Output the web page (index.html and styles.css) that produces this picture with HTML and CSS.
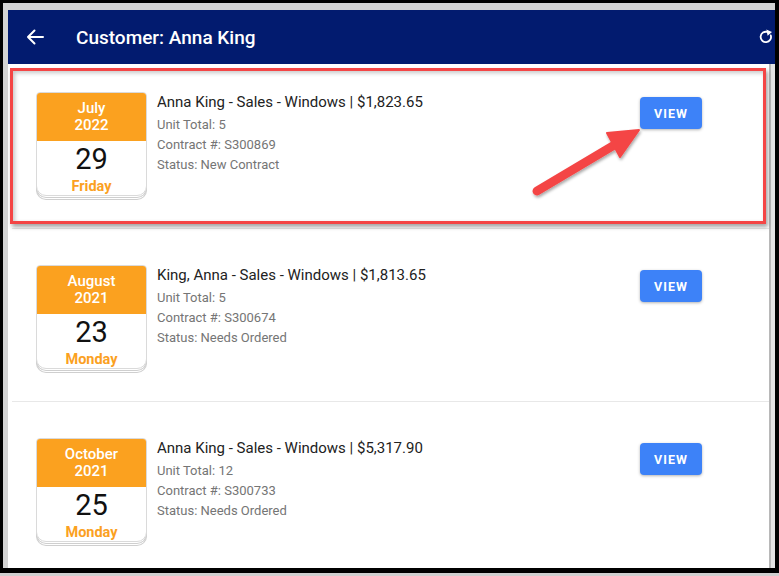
FILE: index.html
```html
<!DOCTYPE html>
<html>
<head>
<meta charset="utf-8">
<link rel="stylesheet" href="styles.css">
</head>
<body>
<div class="frame">
  <div class="app">
    <header class="topbar">
      <svg class="back" width="18" height="16" viewBox="0 0 18 16"><path d="M17 8H2M8.5 1.5L2 8l6.5 6.5" fill="none" stroke="#fff" stroke-width="2" stroke-linecap="round" stroke-linejoin="round"/></svg>
      <h1 class="title">Customer: Anna King</h1>
      <svg class="refresh" width="16" height="16" viewBox="0 0 16 16"><path d="M12.8 6.4A5.2 5.2 0 1 1 9.4 3" fill="none" stroke="#fff" stroke-width="1.8" stroke-linecap="round"/><path d="M8.3 0.4L14 2.9L9.6 6.8Z" fill="#fff"/></svg>
    </header>
    <main class="list">
      <div class="card first">
        <div class="cal">
          <div class="cal-top">July<br>2022</div>
          <div class="cal-day">29</div>
          <div class="cal-wd">Friday</div>
        </div>
        <div class="info">
          <div class="info-title">Anna King - Sales - Windows | $1,823.65</div>
          <div class="info-line">Unit Total: 5</div>
          <div class="info-line">Contract #: S300869</div>
          <div class="info-line">Status: New Contract</div>
        </div>
        <button class="view">VIEW</button>
      </div>
      <div class="card">
        <div class="cal">
          <div class="cal-top">August<br>2021</div>
          <div class="cal-day">23</div>
          <div class="cal-wd">Monday</div>
        </div>
        <div class="info">
          <div class="info-title">King, Anna - Sales - Windows | $1,813.65</div>
          <div class="info-line">Unit Total: 5</div>
          <div class="info-line">Contract #: S300674</div>
          <div class="info-line">Status: Needs Ordered</div>
        </div>
        <button class="view">VIEW</button>
      </div>
      <div class="card">
        <div class="cal">
          <div class="cal-top">October<br>2021</div>
          <div class="cal-day">25</div>
          <div class="cal-wd">Monday</div>
        </div>
        <div class="info">
          <div class="info-title">Anna King - Sales - Windows | $5,317.90</div>
          <div class="info-line">Unit Total: 12</div>
          <div class="info-line">Contract #: S300733</div>
          <div class="info-line">Status: Needs Ordered</div>
        </div>
        <button class="view">VIEW</button>
      </div>
    </main>
    <div class="highlight"></div>
    <svg class="pointer" width="130" height="90" viewBox="0 0 130 90">
      <defs>
        <filter id="sh" x="-20%" y="-20%" width="140%" height="140%">
          <feDropShadow dx="1" dy="2" stdDeviation="1.5" flood-color="#000" flood-opacity="0.35"/>
        </filter>
      </defs>
      <g filter="url(#sh)">
        <path d="M9 71L88 24" stroke="#f44545" stroke-width="9" stroke-linecap="round" fill="none"/>
        <path d="M111 10L79 13L92 37Z" fill="#f44545" stroke="#f44545" stroke-width="2" stroke-linejoin="round"/>
      </g>
    </svg>
  </div>
</div>
</body>
</html>
```

FILE: styles.css
```css
html, body {
  margin: 0;
  padding: 0;
}
body {
  background: #cfcfcf;
  width: 779px;
  height: 576px;
  overflow: hidden;
  font-family: Roboto, "Liberation Sans", sans-serif;
}
.frame {
  box-sizing: border-box;
  width: 779px;
  height: 573px;
  border-style: solid;
  border-color: #000;
  border-width: 3px 4px 5px 3px;
  padding: 7px 0 0 5px;
  background: #d3d3d3;
}
.app {
  position: relative;
  height: 558px;
  background: #fff;
  overflow: hidden;
  display: flex;
  flex-direction: column;
}
.topbar {
  height: 54px;
  flex: none;
  background: #021b6f;
  display: flex;
  align-items: center;
  color: #fff;
}
.back {
  margin-left: 18px;
  margin-right: 32px;
}
.title {
  margin: 0;
  font-size: 19px;
  font-weight: 500;
  flex: 1;
}
.refresh {
  margin-right: 1px;
}
.list {
  flex: 1;
  box-shadow: inset -4px 0 0 #e4e4e4, inset -6px 0 0 #b8b8b8;
}
.card {
  display: flex;
  align-items: flex-start;
  margin: 0 6px 0 4px;
  padding: 36px 67px 32px 24px;
  border-bottom: 1px solid #e8e8e8;
}
.card.first {
  padding-top: 28px;
}
.cal {
  flex: none;
  box-sizing: border-box;
  width: 111px;
  border: 1px solid #dadada;
  border-radius: 4px 4px 10px 10px;
  background: #fff;
  text-align: center;
  box-shadow: 0 2px 0 -1px #fff, 0 2px 0 0 #cfcfcf, 0 4px 0 -1px #fff, 0 4px 0 0 #cfcfcf;
}
.cal-top {
  background: #fba11f;
  color: #fff;
  font-size: 15px;
  font-weight: 500;
  line-height: 17px;
  padding: 7px 0;
  border-radius: 3px 3px 0 0;
}
.cal-day {
  font-size: 29px;
  line-height: 34px;
  margin-top: 1px;
  color: #111;
}
.cal-wd {
  color: #fba11f;
  font-size: 14.5px;
  font-weight: 700;
  line-height: 16px;
  margin: 3px 0 0;
}
.info {
  flex: 1;
  margin: 1px 0 0 10px;
}
.info-title {
  font-size: 15px;
  line-height: 18px;
  color: #222;
}
.info-line {
  font-size: 13px;
  line-height: 20px;
  color: #757575;
}
.info-title + .info-line {
  margin-top: 4px;
}
.view {
  flex: none;
  margin-top: 5px;
  width: 62px;
  height: 32px;
  border: 0;
  border-radius: 4px;
  background: #3d82f8;
  color: #fff;
  font-family: Roboto, "Liberation Sans", sans-serif;
  font-size: 12.5px;
  font-weight: 700;
  letter-spacing: 1px;
  box-shadow: 0 1px 3px rgba(0,0,0,0.3);
  padding: 0;
}
.highlight {
  position: absolute;
  left: 2px;
  top: 58px;
  width: 756px;
  height: 156px;
  box-sizing: border-box;
  border: 3px solid #f44545;
  box-shadow: 2px 3px 4px rgba(0,0,0,0.35), inset 2px 2px 4px rgba(0,0,0,0.22);
}
.pointer {
  position: absolute;
  left: 520px;
  top: 110px;
}
```
